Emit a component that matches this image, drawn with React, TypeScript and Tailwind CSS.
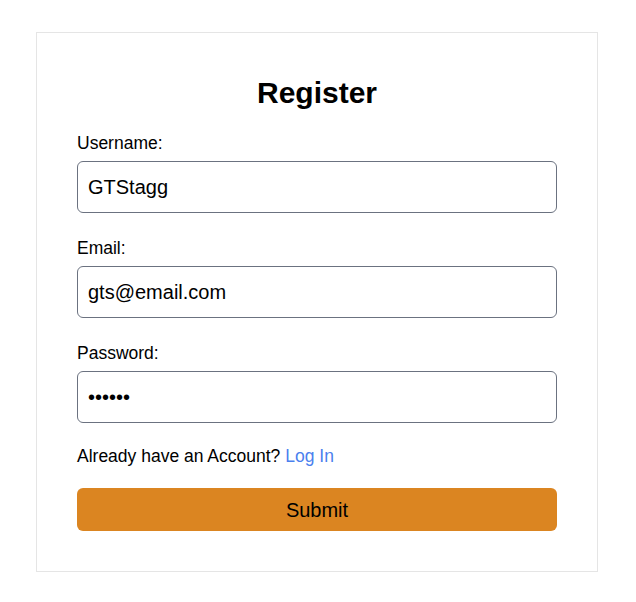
export default function App() {
  return (
    <div className="w-full pt-[32px]" style={{ fontFamily: '"Liberation Sans", Arial, sans-serif' }}>
      <div className="ml-[36px] w-[562px] border border-[#e5e5e5] bg-white px-[40px] pt-[42px] pb-[40px] text-black">
        <h2 className="text-center text-[30px] font-bold leading-[36px]">Register</h2>
        <form className="mt-[20px] flex flex-col" onSubmit={(e) => e.preventDefault()}>
          <label className="text-[17.5px] leading-[24px]">Username:</label>
          <input
            type="text"
            defaultValue="GTStagg"
            className="mt-[6px] h-[52px] w-full rounded-md border border-[#6b7280] px-[10px] text-[20px] outline-none"
          />
          <label className="mt-[23px] text-[17.5px] leading-[24px]">Email:</label>
          <input
            type="email"
            defaultValue="gts@email.com"
            className="mt-[6px] h-[52px] w-full rounded-md border border-[#6b7280] px-[10px] text-[20px] outline-none"
          />
          <label className="mt-[23px] text-[17.5px] leading-[24px]">Password:</label>
          <input
            type="password"
            defaultValue="123456"
            className="mt-[6px] h-[52px] w-full rounded-md border border-[#6b7280] px-[10px] text-[20px] outline-none"
          />
          <p className="mt-[21px] text-[17.5px] leading-[24px]">
            Already have an Account? <a href="#" className="text-[#4a80ee]">Log In</a>
          </p>
          <button
            type="submit"
            className="mt-[20px] h-[43px] w-full rounded-md bg-[#db8521] text-[20px] text-black"
          >
            Submit
          </button>
        </form>
      </div>
    </div>
  );
}
